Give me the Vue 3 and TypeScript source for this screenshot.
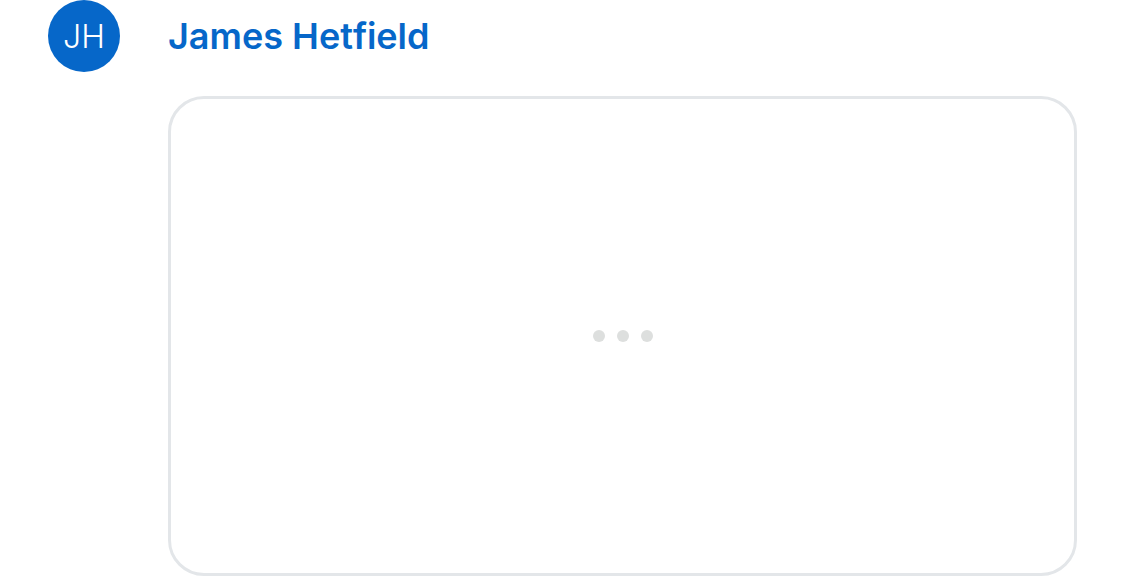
<script setup lang="ts">
interface Sender {
  name: string
  initials: string
}

const sender: Sender = { name: 'James Hetfield', initials: 'JH' }
const dots: number[] = [1, 2, 3]
</script>

<template>
  <article class="message">
    <div class="avatar" aria-hidden="true">{{ sender.initials }}</div>
    <div class="body">
      <h2 class="name">{{ sender.name }}</h2>
      <div class="card" role="status" aria-busy="true">
        <span v-for="dot in dots" :key="dot" class="dot"></span>
      </div>
    </div>
  </article>
</template>

<style>
body {
  background: #ffffff;
}
</style>

<style scoped>
.message {
  display: flex;
  gap: 48px;
  box-sizing: border-box;
  min-height: 100vh;
  padding: 0 48px;
  font-family: Inter, "Liberation Sans", sans-serif;
}

.avatar {
  display: flex;
  flex: none;
  align-items: center;
  justify-content: center;
  width: 72px;
  height: 72px;
  border-radius: 50%;
  background: #0667c9;
  color: #ffffff;
  font-size: 32px;
  font-weight: 300;
}

.body {
  display: flex;
  flex: 1;
  flex-direction: column;
  gap: 24px;
  min-width: 0;
}

.name {
  margin: 0;
  color: #0667c9;
  font-size: 36px;
  font-weight: 600;
  font-kerning: none;
  line-height: 72px;
}

.card {
  display: flex;
  flex: 1;
  align-items: center;
  justify-content: center;
  gap: 12px;
  border: 3px solid #e3e6e9;
  border-radius: 36px;
}

.dot {
  width: 12px;
  height: 12px;
  border-radius: 50%;
  background: #dddfde;
}
</style>
